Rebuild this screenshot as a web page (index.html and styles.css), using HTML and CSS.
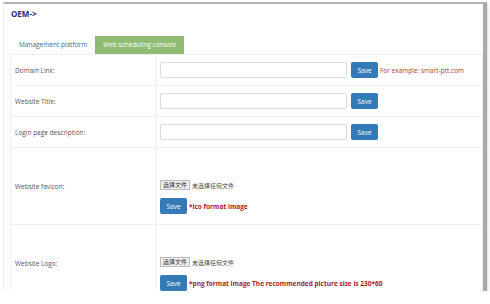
FILE: index.html
```html
<!DOCTYPE html>
<html lang="en">
<head>
    <meta charset="UTF-8">
    <title>OEM</title>
    <link rel="stylesheet" href="styles.css">
</head>
<body>
    <div class="shot">
        <div class="page">
            <h1 class="title">OEM-&gt;</h1>

            <!-- Tabs -->
            <ul class="tabs">
                <li class="tab">Management platform</li>
                <li class="tab active">Web scheduling console</li>
            </ul>

            <table class="settings">
                <tbody>
                    <tr class="row-short">
                        <td class="label">Domain Link:</td>
                        <td class="field">
                            <input type="text" class="text-input">
                            <button class="save-btn">Save</button>
                            <span class="hint">For example: smart-ptt.com</span>
                        </td>
                    </tr>
                    <tr class="row-short">
                        <td class="label">Website Title:</td>
                        <td class="field">
                            <input type="text" class="text-input">
                            <button class="save-btn">Save</button>
                        </td>
                    </tr>
                    <tr class="row-short">
                        <td class="label">Login page description:</td>
                        <td class="field">
                            <input type="text" class="text-input">
                            <button class="save-btn">Save</button>
                        </td>
                    </tr>
                    <tr class="row-upload">
                        <td class="label">Website favicon:</td>
                        <td class="field upload">
                            <div class="file-line">
                                <span class="file-btn">选择文件</span>
                                <span class="file-name">未选择任何文件</span>
                            </div>
                            <div class="save-line">
                                <button class="save-btn">Save</button>
                                <span class="note">*ico format image</span>
                            </div>
                        </td>
                    </tr>
                    <tr class="row-upload">
                        <td class="label">Website Logo:</td>
                        <td class="field upload">
                            <div class="file-line">
                                <span class="file-btn">选择文件</span>
                                <span class="file-name">未选择任何文件</span>
                            </div>
                            <div class="save-line">
                                <button class="save-btn">Save</button>
                                <span class="note">*png format image The recommended picture size is 230*60</span>
                            </div>
                        </td>
                    </tr>
                </tbody>
            </table>
        </div>
    </div>
</body>
</html>
```

FILE: styles.css
```css
body {
    margin: 0;
    background: #ffffff;
    font-family: "Open Sans", "Noto Sans CJK SC", sans-serif;
    color: #333;
}

.shot {
    margin: 2px 0 0 3px;
    width: 479px;
    height: 287px;
    overflow: hidden;
    border-top: 2px solid #b4b4b4;
    border-right: 4px solid #a9a9a9;
    border-left: 1px solid #f2f2f2;
    box-shadow: 1px 1px 2px rgba(0,0,0,0.15);
}

.page {
    padding-left: 6px;
}

.title {
    margin: 0;
    padding: 4px 0 0 1px;
    height: 28px;
    font-size: 8px;
    font-weight: bold;
    color: #1f2a7a;
}

.tabs {
    list-style: none;
    margin: 0;
    padding: 0 0 0 1px;
    display: flex;
    height: 18px;
}

.tab {
    padding: 0 8px;
    font-size: 6.5px;
    line-height: 18px;
    color: #4a6a85;
}

.tab.active {
    background: #8fbc72;
    color: #ffffff;
}

.settings {
    width: 100%;
    border-collapse: collapse;
}

.settings td {
    border: 1px solid #f0f0f0;
    padding: 0;
}

.label {
    width: 141px;
    padding-left: 4px !important;
    font-size: 6.5px;
    color: #555;
    vertical-align: middle;
}

.row-short {
    height: 31px;
}

.row-upload {
    height: 77px;
}

.field {
    padding-left: 3px !important;
    vertical-align: middle;
    font-size: 0;
}

.text-input {
    box-sizing: border-box;
    width: 187px;
    height: 16px;
    margin: 0;
    border: 1px solid #dcdcdc;
    border-radius: 2px;
    vertical-align: middle;
}

.save-btn {
    box-sizing: border-box;
    height: 16px;
    width: 27px;
    margin: 0 0 0 4px;
    padding: 0;
    border: none;
    border-radius: 2px;
    background: #337ab7;
    color: #ffffff;
    font-family: "Open Sans", sans-serif;
    font-size: 6.5px;
    vertical-align: middle;
}

.hint {
    margin-left: 2px;
    font-size: 6.5px;
    color: #b23a3a;
    vertical-align: middle;
}

.upload {
    vertical-align: top;
    padding-top: 32px !important;
}

.file-line {
    display: flex;
    align-items: center;
    height: 10px;
}

.file-btn {
    box-sizing: border-box;
    height: 10px;
    padding: 0 2px;
    border: 1px solid #bbbbbb;
    background: #efefef;
    font-family: "Noto Sans CJK SC", sans-serif;
    font-size: 6px;
    line-height: 8px;
    color: #333;
}

.file-name {
    margin-left: 2px;
    font-family: "Noto Sans CJK SC", sans-serif;
    font-size: 6px;
    color: #444;
}

.save-line {
    display: flex;
    align-items: center;
    margin-top: 8px;
}

.save-line .save-btn {
    margin-left: 0;
}

.note {
    margin-left: 2px;
    font-size: 6.5px;
    font-weight: bold;
    color: #a51d24;
}
```
